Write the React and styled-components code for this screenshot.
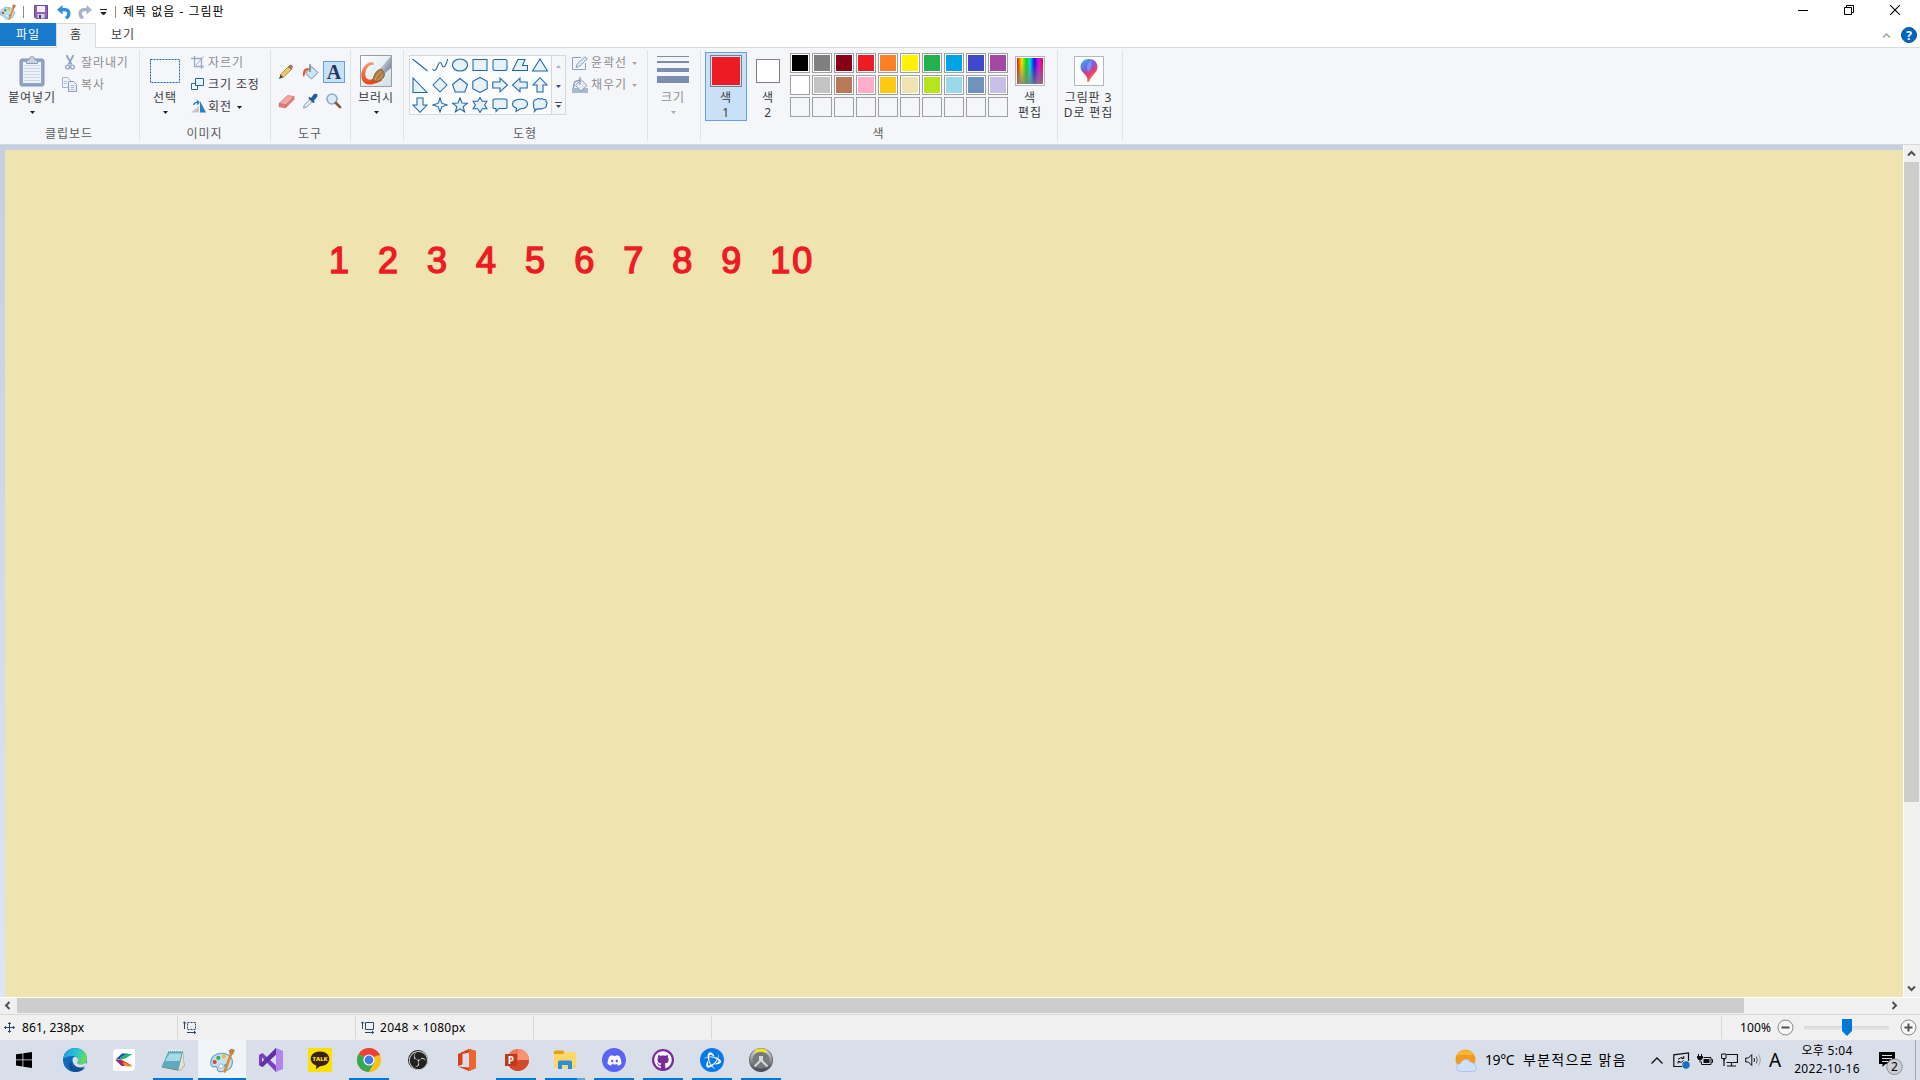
import React from "react";
import styled, { createGlobalStyle, css } from "styled-components";
import { FaDiscord, FaGithub } from "react-icons/fa";
import { SiObsstudio, SiBattledotnet } from "react-icons/si";

const Global = createGlobalStyle`
  * { box-sizing: border-box; }
  body { margin: 0; overflow: hidden; background: #fff; }
  svg { display: block; flex: none; }
`;

const Window = styled.div`
  width: 1920px;
  height: 1080px;
  display: flex;
  flex-direction: column;
  background: #fff;
  color: #1e1e1e;
  font-family: "Noto Sans", "Noto Sans CJK KR", sans-serif;
  font-size: 12px;
  white-space: nowrap;
`;

/* ---------- title bar ---------- */
const TitleBar = styled.header`
  height: 23px;
  display: flex;
  align-items: center;
  justify-content: space-between;
`;
const QuickAccess = styled.div`
  display: flex;
  align-items: center;
`;
const Tool = styled.span`
  display: flex;
  justify-content: ${(p) => p.$align || "center"};
  width: ${(p) => p.$w}px;
`;
const Divider = styled.span`
  width: 1px;
  height: 12px;
  background: #8a8a8a;
`;
const Title = styled.span`
  margin-left: 7px;
  line-height: 22px;
  color: #000;
  letter-spacing: 1px;
`;
const Controls = styled.div`
  display: flex;
  height: 20px;
  margin: -3px 2px 0 0;
`;
const Control = styled.button`
  width: 46px;
  height: 20px;
  padding: 0;
  border: 0;
  background: none;
  display: flex;
  align-items: center;
  justify-content: center;
`;

/* ---------- tabs ---------- */
const Tabs = styled.nav`
  height: 25px;
  display: flex;
  border-bottom: 1px solid #dadbdc;
`;
const FileTab = styled.div`
  width: 56px;
  height: 23px;
  line-height: 24px;
  text-align: center;
  color: #fff;
  background: #1979ca;
  letter-spacing: 0.9px;
`;
const Tab = styled.div`
  width: ${(p) => p.$w}px;
  height: 25px;
  line-height: 24px;
  text-align: center;
  color: #3b3b3b;
  letter-spacing: 0.9px;
  ${(p) =>
    p.$active &&
    css`
      background: #f5f6f7;
      border: 1px solid #dadbdc;
      border-bottom: 0;
      line-height: 22px;
    `}
`;
const TabTools = styled.div`
  margin-left: auto;
  display: flex;
  align-items: center;
  gap: 10px;
  padding-right: 3px;
`;

/* ---------- ribbon ---------- */
const Ribbon = styled.section`
  height: 97px;
  display: flex;
  padding-top: 2px;
  background: #f4f6f9;
  border-bottom: 1px solid #d5d8dc;
`;
const Group = styled.div`
  width: ${(p) => p.$w}px;
  height: 91px;
  display: flex;
  flex-direction: column;
  border-right: 1px solid #e0e2e5;
`;
const GroupBody = styled.div`
  height: 74px;
  display: flex;
  align-items: flex-start;
  padding-left: ${(p) => p.$pl || 0}px;
`;
const GroupLabel = styled.div`
  height: 17px;
  line-height: 20px;
  text-align: center;
  color: #5a5a5a;
  letter-spacing: 0.9px;
  padding-right: 1px;
`;
const BigButton = styled.div`
  width: ${(p) => p.$w}px;
  height: 69px;
  margin-top: 2px;
  margin-left: ${(p) => p.$ml || 0}px;
  display: flex;
  flex-direction: column;
  align-items: center;
  padding-top: 1px;
  border: 1px solid ${(p) => (p.$active ? "#62a2e4" : "transparent")};
  background: ${(p) => (p.$active ? "#c9e0f7" : "none")};
  color: ${(p) => (p.$muted ? "#8d8d8d" : "#3b3b3b")};
`;
const IconArea = styled.div`
  height: 34px;
  margin-bottom: 1px;
  display: flex;
  align-items: center;
  justify-content: center;
`;
const Caption = styled.div`
  height: 15px;
  line-height: 17px;
  letter-spacing: 0.85px;
`;
const DropMark = styled.div`
  padding-top: 7px;
`;
const Stack = styled.div`
  display: flex;
  flex-direction: column;
  margin: 1px 0 0 ${(p) => p.$ml || 0}px;
`;
const SmallButton = styled.div`
  height: 22px;
  padding-top: 2px;
  display: flex;
  align-items: center;
  color: ${(p) => (p.$muted ? "#8d8d8d" : "#3b3b3b")};
  line-height: 20px;
  letter-spacing: 0.9px;
`;
const SmallIcon = styled.span`
  width: ${(p) => p.$w || 19}px;
  display: flex;
  margin-bottom: 1px;
`;
const SmallArrow = styled.span`
  margin-left: ${(p) => p.$ml || 5}px;
`;
const ToolGrid = styled.div`
  display: grid;
  grid-template-columns: repeat(3, 22px);
  grid-auto-rows: 22px;
  gap: 7px 2px;
  margin-top: 11px;
`;
const ToolCell = styled.div`
  display: flex;
  align-items: center;
  justify-content: center;
  border: 1px solid ${(p) => (p.$active ? "#62a2e4" : "transparent")};
  background: ${(p) => (p.$active ? "#c9e0f7" : "none")};
`;
const LetterA = styled.span`
  font: bold 20px/20px "Liberation Serif", serif;
  color: #1f3864;
`;
const ShapeBox = styled.div`
  width: 157px;
  height: 60px;
  margin-top: 5px;
  display: flex;
  border: 1px solid #d5d8dc;
  background: #fbfcfd;
`;
const ShapeGrid = styled.div`
  display: grid;
  grid-template-columns: repeat(7, 20px);
  grid-auto-rows: 20px;
  width: 141px;
  height: 58px;
  margin-top: -1px;
`;
const ShapeCell = styled.div`
  display: flex;
  align-items: center;
  justify-content: center;
`;
const ShapeScroll = styled.div`
  width: 14px;
  display: grid;
  grid-template-rows: 20px 20px 18px;
  place-items: center;
  border-left: 1px solid #d5d8dc;
  background: #f4f6f9;
`;
const Lines = styled.div`
  width: 32px;
  height: 32px;
  display: flex;
  flex-direction: column;
  justify-content: space-between;
  padding: 1px 0 4px;
`;
const Line = styled.span`
  height: ${(p) => p.$h}px;
  background: #7b8db0;
`;
const Swatch = styled.div`
  width: ${(p) => p.$s}px;
  height: ${(p) => p.$s}px;
  border: 1px solid ${(p) => p.$border || "#a0a0a0"};
  padding: 1px;
  background: ${(p) => (p.$c ? p.$gap || "#fff" : "transparent")};
  &::before {
    content: "";
    display: block;
    height: 100%;
    background: ${(p) => p.$c || "transparent"};
  }
`;
const Palette = styled.div`
  display: grid;
  grid-template-columns: repeat(10, 20px);
  grid-auto-rows: 20px;
  gap: 2px;
  margin: 3px 0 0 1px;
`;
const IconFrame = styled.div`
  width: ${(p) => p.$s}px;
  height: ${(p) => p.$s}px;
  border: 1px solid #b4b8bd;
  padding: 1px;
  background: #fff;
  overflow: hidden;
`;
const Rainbow = styled.div`
  height: 100%;
  background: linear-gradient(to bottom, transparent 20%, #808080cc),
    linear-gradient(to right, #e01010, #f5e000 18%, #10d020 36%, #00e0e0 50%, #1010e0 66%, #e010e0 84%, #e01030);
`;

/* ---------- canvas ---------- */
const Workspace = styled.main`
  height: 852px;
  display: flex;
`;
const Backdrop = styled.div`
  width: 1903px;
  padding: 5px 0 0 5px;
  background: linear-gradient(#c6cfe0, #dce6f4);
`;
const Canvas = styled.div`
  height: 847px;
  padding: 91px 0 0 324px;
  background: #efe3af;
`;
const Numbers = styled.div`
  font-family: "Liberation Sans", sans-serif;
  font-size: 36px;
  line-height: 40px;
  color: #ed1c24;
  white-space: pre;
  letter-spacing: 2px;
  word-spacing: 1.5px;
  -webkit-text-stroke: 1.5px #ed1c24;
  stroke-linejoin: round;
`;
const VScroll = styled.div`
  width: 17px;
  display: flex;
  flex-direction: column;
  align-items: flex-start;
  background: #f0f0f0;
  border-left: 1px solid #fff;
`;
const VThumb = styled.div`
  width: 15px;
  height: 640px;
  background: #cdcdcd;
`;
const VArrow = styled.div`
  height: 17px;
  display: flex;
  align-items: center;
  padding-left: 3px;
  margin-top: ${(p) => (p.$end ? "auto" : 0)};
`;
const HScroll = styled.div`
  height: 17px;
  display: flex;
  align-items: flex-start;
  padding-right: 17px;
  background: #f0f0f0;
  border-top: 1px solid #fff;
`;
const HThumb = styled.div`
  width: 1727px;
  height: 15px;
  background: #cdcdcd;
`;
const HArrow = styled.div`
  width: 17px;
  height: 15px;
  display: flex;
  align-items: center;
  justify-content: ${(p) => (p.$end ? "center" : "flex-start")};
  padding-left: ${(p) => (p.$end ? 0 : 3)}px;
  margin-left: ${(p) => (p.$end ? "auto" : 0)};
`;

/* ---------- status bar ---------- */
const StatusBar = styled.footer`
  height: 26px;
  display: flex;
  padding-top: 1px;
  border-top: 1px solid #d7d7d7;
  background: #f0f0f0;
`;
const StatusCell = styled.div`
  width: ${(p) => p.$w}px;
  height: 23px;
  padding-left: ${(p) => p.$pl}px;
  display: flex;
  align-items: center;
  gap: ${(p) => p.$gap || 6}px;
  border-right: 1px solid #d7d7d7;
  color: #000;
  letter-spacing: ${(p) => p.$ls || 0}px;
`;
const Zoom = styled.div`
  margin-left: auto;
  width: 199px;
  height: 23px;
  padding-left: 18px;
  border-left: 1px solid #d7d7d7;
  display: flex;
  align-items: center;
  color: #000;
`;
const Percent = styled.span`
  width: 37px;
  letter-spacing: 0.1px;
`;
const Slider = styled.div`
  width: 85px;
  height: 17px;
  margin: 0 11px 0 10px;
  display: flex;
  align-items: center;
  justify-content: center;
  background: linear-gradient(#d6d6d6, #e7eaea) center / 100% 4px no-repeat;
`;

/* ---------- taskbar ---------- */
const Taskbar = styled.div`
  height: 40px;
  display: flex;
  background: #d8dfe8;
`;
const TaskItem = styled.div`
  width: 48px;
  height: 40px;
  margin-right: ${(p) => p.$mr ?? 1}px;
  display: flex;
  flex-direction: column;
  align-items: center;
  justify-content: space-between;
  background: ${(p) => (p.$active ? "#f0f4f8" : "none")};
`;
const TaskIcon = styled.div`
  height: 38px;
  padding-top: 2px;
  display: flex;
  align-items: center;
`;
const Underline = styled.div`
  width: ${(p) => (p.$full ? 48 : 40)}px;
  height: 2px;
  background: ${(p) => (p.$split ? "linear-gradient(to right, #0078d7 80%, #5aa5e4 80%)" : "#0078d7")};
`;
const Disc = styled.div`
  width: ${(p) => p.$s || 24}px;
  height: ${(p) => p.$s || 24}px;
  border-radius: 50%;
  display: flex;
  align-items: center;
  justify-content: center;
  color: #fff;
  background: ${(p) => p.$c};
`;
const Tray = styled.div`
  margin-left: auto;
  display: flex;
  align-items: center;
  color: #000;
`;
const Weather = styled.div`
  display: flex;
  align-items: center;
  width: 190px;
  font-size: 14px;
  line-height: 20px;
`;
const Temp = styled.span`
  width: 38px;
  margin-left: 7px;
  letter-spacing: -0.4px;
`;
const Sky = styled.span`
  letter-spacing: 1.25px;
`;
const TrayIcon = styled.div`
  width: 24px;
  display: flex;
  justify-content: center;
`;
const Ime = styled.div`
  width: 20px;
  font: 19px/20px "Noto Sans", sans-serif;
  text-align: center;
`;
const Clock = styled.div`
  width: 84px;
  text-align: center;
  line-height: 18px;
  letter-spacing: 0.3px;
`;
const Notice = styled.div`
  width: 46px;
  padding-left: 10px;
`;
const Peek = styled.div`
  width: 5px;
  height: 40px;
  border-left: 1px solid #9fa5ad;
`;

/* ---------- icons ---------- */
const Svg = ({ w, h = w, vb, children, className }) => (
  <svg className={className} width={w} height={h} viewBox={vb || `0 0 ${w} ${h}`} fill="none">
    {children}
  </svg>
);
const Arrow = ({ c = "#1e1e1e" }) => (
  <Svg w={5} h={3}>
    <path d="M0 0h5L2.500 3z" fill={c} />
  </Svg>
);
const Chevron = ({ d = "up", c = "#505050", w = 2, s = 9 }) => (
  <Svg w={s} vb="0 0 9 9">
    <path
      d={{ up: "M1 6.500l3.500-3.500L8 6.500", down: "M1 2.500l3.500 3.500L8 2.500", left: "M6.500 1L3 4.500 6.500 8", right: "M2.500 1L6 4.500 2.500 8" }[d]}
      stroke={c}
      strokeWidth={w}
    />
  </Svg>
);
const PaintIcon = ({ s }) => (
  <Svg w={s} vb="0 0 24 24">
    <path d="M11 5C5 5 .7 9 .7 14.200c0 3 1.700 4.300 3.600 3.800 1.900-.5 2.900.3 2.700 2-.2 1.800 1.300 2.800 4 2.800 6 0 10.500-4 10.500-9.300S17 5 11 5z" fill="#c2e0f2" stroke="#5b9fc4" />
    <circle cx="4.500" cy="13.500" r="1.900" fill="#d8432e" />
    <circle cx="8" cy="9.500" r="2" fill="#3fae49" />
    <circle cx="13.300" cy="8" r="2" fill="#f2b92b" />
    <circle cx="10.500" cy="17.500" r="2.200" fill="#fff" stroke="#5b9fc4" strokeWidth=".6" />
    <circle cx="15.500" cy="17" r="1.800" fill="#3f84d0" />
    <path d="M20.300 5.500L14 22.500" stroke="#e58a2c" strokeWidth="2.600" strokeLinecap="round" />
    <path d="M18 2.500l3-2 2.800 1.600-1.600 4.200-3.600-1z" fill="#b98358" />
  </Svg>
);
const SaveIcon = () => (
  <Svg w={14}>
    <path d="M.5.5h13v13H2L.5 12z" fill="#8e63b8" stroke="#6b4496" />
    <path d="M3 1h8v6H3z" fill="#f3edf8" />
    <path d="M3.500 9h7v4.500h-7z" fill="#d6d0dc" />
    <path d="M5 10h2v3.500H5z" fill="#4a3566" />
  </Svg>
);
const UndoShape = styled(Svg)`
  transform: ${(p) => (p.$flip ? "scaleX(-1)" : "none")};
`;
const UndoIcon = ({ c, flip }) => (
  <UndoShape w={14} $flip={flip}>
    <path d="M5.500 0v9.500L0 4.700z" fill={c} />
    <path d="M4 4.700h3.500c5 0 6 5.300 1.500 8.600" stroke={c} strokeWidth="3.300" />
  </UndoShape>
);
const Clipboard = () => (
  <Svg w={26} h={31}>
    <rect x="1" y="3" width="24" height="27" rx="2" fill="#91a3c2" stroke="#8295b6" />
    <path d="M4 6h18v21H4z" fill="#eef3fa" />
    <path d="M5 9.500h16M5 12.500h16M5 15.500h16M5 18.500h16M5 21.500h16M5 24.500h16" stroke="#c9d6e8" />
    <path d="M7.500 7.500V4H10c0-4.500 6-4.500 6 0h2.500v3.500z" fill="#c8d1e0" stroke="#8b9bb8" />
  </Svg>
);
const CutIcon = () => (
  <Svg w={10} h={15}>
    <path d="M1.500 0l5 9.500M8.500 0l-5 9.500" stroke="#93a3bf" strokeWidth="1.800" />
    <circle cx="2.500" cy="12" r="1.900" stroke="#93a3bf" strokeWidth="1.300" />
    <circle cx="7.500" cy="12" r="1.900" stroke="#93a3bf" strokeWidth="1.300" />
  </Svg>
);
const CopyIcon = () => (
  <Svg w={15}>
    <path d="M.5.500h5l3 3v7h-8z" fill="#eef2f8" stroke="#a3b1ca" />
    <path d="M6.500 4.500h5l3 3v7h-8z" fill="#eef2f8" stroke="#8c9dbb" />
    <path d="M2 4.500h3M2 6.500h3M8.500 8.500h4M8.500 10.500h4M8.500 12.500h4" stroke="#b1bfd5" />
  </Svg>
);
const CropIcon = () => (
  <Svg w={13}>
    <path d="M3.500 0v10.500H13M0 2.500h10.500V13" stroke="#9aa9c4" strokeWidth="1.300" />
    <path d="M5 9l7.500-8.500" stroke="#9aa9c4" />
  </Svg>
);
const ResizeIcon = () => (
  <Svg w={14} h={13}>
    <path d="M.5 5.500h6v6h-6z" fill="#fff" stroke="#1b66ab" />
    <path d="M4.500.5h8v7h-8z" fill="#e9f3fb" stroke="#1b66ab" />
  </Svg>
);
const RotateIcon = () => (
  <Svg w={15} h={13}>
    <path d="M0 12.500h8V6z" fill="#c3c6ca" />
    <path d="M9 1v11.500H15z" fill="#2b7fc0" />
    <path d="M2.500 5C3.500 2.500 5 2 7 2.500M6 .500l2 2-2 2" stroke="#1979ca" strokeWidth="1.200" />
  </Svg>
);
const SelectIcon = () => (
  <Svg w={30} h={24}>
    <path d="M.5.5h29v23H.5z" stroke="#1b66ab" strokeDasharray="2 1" />
  </Svg>
);
const PencilIcon = () => (
  <Svg w={16}>
    <path d="M1 15l1.500-4.500 2.800 2.800z" fill="#4b4036" />
    <path d="M2.500 10.500l8-8 3 3-8.200 7.800z" fill="#f1c95a" stroke="#94702b" strokeWidth=".7" />
    <path d="M10 3l2-2q2-.3 2.700 1.500L13.500 5.500z" fill="#c46565" stroke="#5a8a6a" strokeWidth=".6" />
  </Svg>
);
const BucketIcon = () => (
  <Svg w={17} h={16}>
    <path d="M9.500 2.500l6.500 6-6.500 6.500-6-5.800z" fill="#cfe4f2" stroke="#6a8ea8" />
    <path d="M8 0v8" stroke="#54738c" strokeWidth="1.200" />
    <path d="M8 4.500C3 3.500.5 5 1 12.500c2.300.3 2-4 2.500-5z" fill="#ec5320" />
  </Svg>
);
const FillIcon = () => (
  <Svg w={16} h={16}>
    <path d="M0 11h16v5H0z" fill="#a9b8d1" />
    <path d="M9 2.500l6 6-6 5.500-5.500-5.500z" fill="#e6ecf5" stroke="#8c9dbb" />
    <path d="M8 0v7.500M8 3.500C3.500 3 1.500 5 1.500 11" stroke="#8c9dbb" strokeWidth="1.400" />
  </Svg>
);
const EraserIcon = () => (
  <Svg w={17} h={15}>
    <path d="M1 9.500L9.500 1.500l6.500 1-8 8.500z" fill="#f3a6a2" stroke="#cf7672" strokeWidth=".7" />
    <path d="M1 9.500l7 1.500-.5 3L1 12.800zM8 11l8-8.500v3L7.500 14z" fill="#e27a78" stroke="#c86562" strokeWidth=".5" />
  </Svg>
);
const DropperIcon = () => (
  <Svg w={16}>
    <path d="M1.500 15l1-3.300L8.500 6l2.200 2-6 6z" fill="#e6eef5" stroke="#7b8fa3" strokeWidth=".9" />
    <path d="M7 4.500l5 5M9 6.500l3.500-4.500q2-1 2 1L10.500 8z" stroke="#1d5fa0" strokeWidth="2" fill="#1d5fa0" />
  </Svg>
);
const MagnifierIcon = () => (
  <Svg w={16}>
    <circle cx="6" cy="6" r="5" fill="#d9ebf8" stroke="#93a9c4" strokeWidth="1.600" />
    <path d="M10 10l4 4.200" stroke="#80583c" strokeWidth="2.600" strokeLinecap="round" />
  </Svg>
);
const BrushIcon = () => (
  <Svg w={32}>
    <defs>
      <linearGradient id="bbg" x1="0" y1="0" x2="1" y2="1">
        <stop stopColor="#fff" />
        <stop offset="1" stopColor="#cfe0e8" />
      </linearGradient>
      <linearGradient id="paint" x1="0" y1="0" x2="0" y2="1">
        <stop stopColor="#f79a78" />
        <stop offset="1" stopColor="#e9430f" />
      </linearGradient>
      <linearGradient id="ferrule" x1="0" y1="0" x2="1" y2="1">
        <stop stopColor="#eef2f6" />
        <stop offset="1" stopColor="#66768b" />
      </linearGradient>
    </defs>
    <path d="M.5.500h31v31H.500z" fill="url(#bbg)" stroke="#9a9c9e" />
    <path d="M13.500 7.500C7 5.500 1.500 13 1.300 20c-.2 6 3.500 9.500 8 9.500 5 0 11-2.500 13-4.500l-8-2c-4.500 3-9 2-9-3.500C5.300 13.500 10 9 13.500 10z" fill="url(#paint)" />
    <path d="M20 14L31 1v12l-7 6z" fill="url(#ferrule)" />
    <path d="M13 26.500c0-7 4-12 8.500-12.500l3 4.500c.5 5-4.500 8-11.500 8z" fill="#b07a42" stroke="#79502a" strokeWidth=".7" />
    <path d="M15 25c1-4 3.500-7 6.500-8.500M17 25.500c2-1 4.500-3 5.500-6" stroke="#d8a86d" />
  </Svg>
);
const OutlineIcon = () => (
  <Svg w={16} h={14}>
    <path d="M13.500 7v6.500H.5v-12H9" stroke="#8c9dbb" />
    <path d="M4 11.500l1.200-3.700L13 .800l2.300 2-7.600 7.500z" fill="#dfe6f0" stroke="#8c9dbb" />
  </Svg>
);
const shapePaths = [
  "M.5 2l15 12",
  "M.5 12c2.500 4 4.500-1 5.500-4s3-3.500 4 0 4 2 5.500-6",
  "M8 2c4.500 0 7.500 2.700 7.500 6S12.500 14 8 14 .5 11.300.5 8 3.500 2 8 2z",
  "M1 2.500h14v11H1z",
  "M3 2.500h10q2 0 2 2v7q0 2-2 2H3q-2 0-2-2v-7q0-2 2-2z",
  "M.5 13.500l5.500-11h7l-2.500 6h5v5z",
  "M8 2L15.500 14H.5z",
  "M1 1v14.500h14z",
  "M8 1l7 7-7 7-7-7z",
  "M8 1.500L15.500 7.500l-2.700 7.500H3.200L.5 7.500z",
  "M8 .5l7.200 3.800v7.400L8 15.500.8 11.700V4.300z",
  "M.8 5h7.200V1.200L15.500 8 8 14.800V11H.8z",
  "M15.200 5H8V1.200L.5 8 8 14.800V11h7.200z",
  "M5 15V8H1L8 .7 15 8h-4v7z",
  "M11 1v7h4l-7 7.300L1 8h4V1z",
  "M8 1l1.800 5.200L15 8 9.800 9.800 8 15 6.200 9.800 1 8l5.200-1.800z",
  "M8 .8l1.900 5.100 5.500.3-4.300 3.400 1.500 5.200L8 11.800l-4.600 3 1.500-5.200L.6 6.200l5.500-.3z",
  "M8 .5l2.300 3.800h4.600L12.600 8l2.300 3.700h-4.600L8 15.500l-2.300-3.800H1.100L3.400 8 1.100 4.300h4.600z",
  "M2.500 2h11Q15 2 15 3.500v6.500q0 1.500-1.500 1.500H7L4 14.500v-3H2.500Q1 11.500 1 10V3.500Q1 2 2.500 2z",
  "M8.500 2.200c4.200 0 7 2 7 4.800s-2.800 4.800-7 4.800L4 14.500l.5-3.300C2 10.200.5 9 .5 7c0-2.800 3.800-4.800 8-4.800z",
  "M4.500 2.500q1.800-1.800 3.500-.3 2.200-1.200 3.700.3 2.800-.3 2.300 2 2 1.500.3 3.300.5 2.900-2.200 3.200-1.600 1.600-3.700.5-2.200 1.100-3.200.2L2.500 14.500l.5-2.700Q.5 10.500 2 8 .5 6.500 1.800 4.800 1.700 2.500 4.500 2.500z",
];
const QuadrantIcon = ({ dashed }) => (
  <Svg w={14} h={13}>
    <path d="M1.500 8V1M0 2.500L1.500.8 3 2.500M4 11.500h8.500M11 10l1.700 1.500L11 13" stroke="#2b4668" />
    <path d="M4.500 1.500h8v7h-8z" stroke="#2b4668" strokeDasharray={dashed ? "2 1" : undefined} />
  </Svg>
);
const MoveIcon = () => (
  <Svg w={11}>
    <path d="M5.500.5v10M.5 5.500h10M4 2L5.500.5 7 2M4 9l1.500 1.500L7 9M2 4L.5 5.500 2 7M9 4l1.500 1.500L9 7" stroke="#2b4668" />
  </Svg>
);
const ZoomButton = ({ plus }) => (
  <Svg w={17}>
    <circle cx="8.500" cy="8.500" r="7.500" fill="#f6f6f6" stroke="#858585" />
    <path d={plus ? "M4.500 8.500h8M8.500 4.500v8" : "M4.500 8.500h8"} stroke="#505050" strokeWidth="2" />
  </Svg>
);
const Paint3D = () => (
  <Svg w={26}>
    <defs>
      <linearGradient id="drop" x1="0" y1="0" x2=".7" y2="1">
        <stop stopColor="#20c8e8" />
        <stop offset=".45" stopColor="#8058e0" />
        <stop offset=".7" stopColor="#e83c78" />
        <stop offset="1" stopColor="#f6a51c" />
      </linearGradient>
    </defs>
    <path d="M13 1c5 0 8.500 3.500 8.500 8 0 6-6 8-8 14-1.500 2-3 1-2-1 0-6-7-7-7-13C4.500 4.500 8 1 13 1z" fill="url(#drop)" />
    <path d="M15 3c-4 2-5 6-3 11 3-3 5-7 3-11z" fill="#68a8fa" opacity=".8" />
    <path d="M7 12c1 4 4 5 5 9l2-5z" fill="#e93b67" opacity=".8" />
  </Svg>
);

const WindowsLogo = () => (
  <Svg w={16}>
    <path d="M0 2.300l6.500-.9v6.100H0zM7.300 1.300L16 0v7.500H7.300zM0 8.300h6.500v6.200L0 13.600zM7.300 8.300H16V16l-8.700-1.300z" fill="#000" />
  </Svg>
);
const EdgeIcon = () => (
  <Svg w={24}>
    <defs>
      <linearGradient id="edgeTop" x1="0" y1="0" x2="1" y2=".3">
        <stop stopColor="#1f9ae0" />
        <stop offset=".6" stopColor="#2bc3d2" />
        <stop offset="1" stopColor="#62dc5a" />
      </linearGradient>
    </defs>
    <circle cx="12" cy="12" r="12" fill="#0f6cbd" />
    <path d="M.3 11C1 4.500 6 0 12.200 0 19 0 24 5 24 10.500c0 4-3 6-6.200 6-3 0-4-1.200-3.300-2.300 1.800-2.600-.3-6.200-4.500-6.200C5.500 8 1 9.500.3 11z" fill="url(#edgeTop)" />
    <path d="M8.500 12c-1.500 5 2.500 9.500 8 9.300 2 0 4-1 5.500-2-1.500 2.700-5 4.700-9.500 4.700C7 24 3.500 17 8.500 12z" fill="#124e97" />
    <path d="M9.500 12c0-2.500 1.500-3.500 3-3.300 2.500.8 3.300 3.500 2 5.500-.7 1.100.3 2.300 3.300 2.300 2 0 3.800-.7 5-2l.7 2.500-2.500 2.800c-6 2-11.500-2-11.500-7.800z" fill="#d8dfe8" />
    <path d="M9.500 13c.5 5 5.500 8 12 5.500-1.500 2-4 3-6 2.700-4-.4-6.500-4-6-8.200z" fill="#124e97" />
  </Svg>
);
const RibbonAppIcon = () => (
  <Svg w={22}>
    <path d="M4.500 0H20q2 0 2 2v15.500q0 4.500-4.500 4.500H2q-2 0-2-2V4.500Q0 0 4.500 0z" fill="#fff" />
    <path d="M2.500 10.500L9 4.500h6l-6 6z" fill="#1e4fa3" />
    <path d="M7 8.500l6-3.500h6.500l-7 4.500-6 1z" fill="#1eb47b" />
    <path d="M2.500 11H9l10 5.500h-6.500z" fill="#e42c48" />
    <path d="M8 14.500l4-1 7.500 4H14z" fill="#f08b1c" />
    <path d="M2.500 11H7l5 6H8.500z" fill="#9b2b71" />
  </Svg>
);
const NotepadIcon = () => (
  <Svg w={24} h={24}>
    <path d="M8 3.500l14 0 1.500 14.500-4.500 5L1 19.500z" fill="#8c7146" />
    <path d="M22 3l1 15-4.500 5-1.500-1z" fill="#e9e2d3" />
    <path d="M7.500 3H22l-4.500 19L.5 19z" fill="#5faabd" />
    <path d="M8.500 5.500H20.500l-2 7.500L4 13z" fill="#a5dce3" />
    <path d="M8 2.500h14" stroke="#eef3f6" strokeWidth="2" strokeDasharray="1 1" />
  </Svg>
);
const VisualStudioIcon = () => (
  <Svg w={24}>
    <path d="M17 0l7 3v18l-7 3z" fill="#b083f0" />
    <path d="M17 0v6.500L3.500 19 0 17V7l3.500-2L17 17.500V24L3 9.500v5z" fill="#7a3fc0" />
    <path d="M17 0v6.500L3.500 19 0 17l17-17z" fill="#6031a8" />
  </Svg>
);
const TalkIcon = () => (
  <Svg w={24}>
    <path d="M0 0h24v24H0z" fill="#fae100" />
    <path d="M12 3.500c5.500 0 9.300 3.200 9.300 7.300s-3.800 7.400-9.300 7.400l-4 3 .4-3.500C5 16.500 2.700 14 2.700 10.800c0-4.100 3.800-7.300 9.300-7.300z" fill="#3b1e1e" />
    <text x="12" y="13" textAnchor="middle" fontSize="5.800" fontWeight="800" fontFamily="Open Sans, sans-serif" fill="#fae100">TALK</text>
  </Svg>
);
const ChromeIcon = () => (
  <Svg w={24}>
    <circle cx="12" cy="12" r="12" fill="#fbc116" />
    <path d="M12 12L1.600 6A12 12 0 0 1 22.400 6z" fill="#ea4335" />
    <path d="M1.600 6A12 12 0 0 0 12 24l5.200-9z" fill="#34a853" />
    <path d="M12 12h11a12 12 0 0 1-11 12l5-9z" fill="#fbc116" />
    <path d="M22.400 6H12v1l11 .5z" fill="#ea4335" />
    <circle cx="12" cy="12" r="5.600" fill="#fff" />
    <circle cx="12" cy="12" r="4.400" fill="#3b7ded" />
  </Svg>
);
const OfficeIcon = () => (
  <Svg w={18} h={24}>
    <path d="M0 6l11-5 7 2v17l-7 3L0 18.500l11 1V4.500L4.500 6v10.500L0 18z" fill="#dc3e15" />
    <path d="M11 1l7 2v17l-7 3z" fill="#f0642d" />
  </Svg>
);
const PowerPointIcon = () => (
  <Svg w={25} h={24}>
    <circle cx="14" cy="12" r="11" fill="#ee7350" />
    <path d="M14 12h11a11 11 0 0 1-21 4.500z" fill="#d3492b" />
    <path d="M14 1a11 11 0 0 1 11 11H14z" fill="#ff9273" />
    <path d="M1 6h12v12H1z" fill="#bd3a1b" />
    <text x="7" y="15.500" textAnchor="middle" fontSize="10" fontWeight="700" fontFamily="Open Sans, sans-serif" fill="#fff">P</text>
  </Svg>
);
const FolderIcon = () => (
  <Svg w={22} h={20}>
    <path d="M0 2q0-1.500 1.500-1.500H9L11 3v3H0z" fill="#e0a10c" />
    <path d="M0 4h9l2-2h11v16H0z" fill="#ffd766" />
    <path d="M4 19v-7q0-1.500 1.500-1.500h11q1.500 0 1.500 1.500v7h-4v-4H8v4z" fill="#2d8fd9" />
  </Svg>
);
const OverwatchIcon = () => (
  <Svg w={24}>
    <defs>
      <linearGradient id="ring" x1="0" y1="0" x2="0" y2="1">
        <stop stopColor="#d4d6d7" />
        <stop offset="1" stopColor="#4a4d52" />
      </linearGradient>
    </defs>
    <circle cx="12" cy="12" r="12" fill="#5b5e63" />
    <circle cx="12" cy="12" r="9.900" fill="#77797d" stroke="url(#ring)" strokeWidth="3" />
    <path d="M6.500 3.500Q12 .8 17.500 3.500" stroke="#f1e21e" strokeWidth="3.200" />
    <path d="M11 8v5L5.500 18.500M13 8v5l5.500 5.500" stroke="#d5d7d8" strokeWidth="2" />
  </Svg>
);
const WeatherIcon = () => (
  <Svg w={23} h={24}>
    <circle cx="10.500" cy="11.500" r="10" fill="#f59a1c" />
    <path d="M2 7A10 10 0 0 1 19 7z" fill="#f5b632" />
    <path d="M5.500 23.500a4 4 0 0 1 0-8 5.500 5.500 0 0 1 10-1.500q3 0 3.500 2.500a3.600 3.600 0 0 1-.5 7z" fill="#cfe0fa" stroke="#9dbdf0" strokeWidth=".7" />
  </Svg>
);
const TabletIcon = () => (
  <Svg w={17}>
    <path d="M9 14.500H.8V2.800L15.500 1v8" stroke="#111" strokeWidth="1.200" />
    <path d="M5 7.500q2.500-2.800 5.500-1.500M10.800 4v2.500H8.500M10.500 8.500q-2 2.800-5 1.500M5 11.500V9.500h2" stroke="#111" />
    <circle cx="13" cy="13" r="3.700" fill="#1d6fbf" />
  </Svg>
);
const BatteryIcon = () => (
  <Svg w={16} h={12}>
    <path d="M6.500 3.500h7.500v7H4.500V7.500M14.500 5.500h1v3h-1" stroke="#111" />
    <path d="M6.500 5h6v4h-6z" fill="#111" />
    <path d="M1.500 0v2.500M4.500 0v2.500M3 5v3.500" stroke="#111" />
    <path d="M0 2h6v2L4.500 6h-3L0 4z" fill="#111" />
  </Svg>
);
const NetworkIcon = () => (
  <Svg w={17} h={14}>
    <path d="M5.500 1.500h11v8H5.500M10.500 9.500v3.500M6 13h9M3 6v7" stroke="#111" strokeWidth="1.200" />
    <path d="M.6 1h4.400v4.500H.6zM3 5v3" stroke="#111" />
  </Svg>
);
const SpeakerIcon = () => (
  <Svg w={17} h={14}>
    <path d="M.7 5h2.800l3.300-3.500v11L3.500 9H.7z" stroke="#111" />
    <path d="M9 5q1 2 0 4" stroke="#111" />
    <path d="M11.300 3.500q2 3.500 0 7" stroke="#555" />
    <path d="M13.500 1.500q3.500 5.500 0 11" stroke="#9aa0a8" />
  </Svg>
);
const NoticeIcon = () => (
  <Svg w={26} h={30}>
    <path d="M0 7h16v12H6.500L3.500 22v-3H0z" fill="#000" />
    <path d="M3 10.500h10M3 13.500h10M3 16.500h6" stroke="#d8dfe8" />
    <circle cx="15.500" cy="21.700" r="7.800" fill="#ccd0d5" stroke="#8a8f95" />
    <text x="15.500" y="26" textAnchor="middle" fontSize="12" fontFamily="Noto Sans, sans-serif" fill="#000">2</text>
  </Svg>
);

/* ---------- data ---------- */
const palette = [
  "#000000", "#7f7f7f", "#880015", "#ed1c24", "#ff7f27", "#fff200", "#22b14c", "#00a2e8", "#3f48cc", "#a349a4",
  "#ffffff", "#c3c3c3", "#b97a57", "#ffaec9", "#ffc90e", "#efe4b0", "#b5e61d", "#99d9ea", "#7092be", "#c8bfe7",
  ...Array(10).fill(null),
];
const tasks = [
  { icon: <WindowsLogo />, mr: 3 },
  { icon: <EdgeIcon /> },
  { icon: <RibbonAppIcon /> },
  { icon: <NotepadIcon />, open: true },
  { icon: <PaintIcon s={25} />, open: true, active: true },
  { icon: <VisualStudioIcon /> },
  { icon: <TalkIcon /> },
  { icon: <ChromeIcon />, open: true },
  { icon: <Disc $s={20} $c="#222"><SiObsstudio size={19} color="#cfcfcf" /></Disc> },
  { icon: <OfficeIcon /> },
  { icon: <PowerPointIcon />, open: true },
  { icon: <FolderIcon />, open: true, split: true },
  { icon: <Disc $c="#5865f2"><FaDiscord size={15} /></Disc>, open: true },
  { icon: <Disc $s={22} $c="#7b2a9a"><FaGithub size={18} /></Disc>, open: true },
  { icon: <Disc $c="#0a78e6"><SiBattledotnet size={17} /></Disc>, open: true },
  { icon: <OverwatchIcon />, open: true },
];

export default function App() {
  return (
    <Window>
      <Global />
      <TitleBar>
        <QuickAccess>
          <Tool $w={23} $align="flex-start"><PaintIcon s={16} /></Tool>
          <Divider />
          <Tool $w={34}><SaveIcon /></Tool>
          <Tool $w={12}><UndoIcon c="#2c92da" /></Tool>
          <Tool $w={30}><UndoIcon c="#a7b3c8" flip /></Tool>
          <Tool $w={15} $align="flex-start">
            <Svg w={8} h={8}><path d="M0 1.500h7M1 4.500h5L3.500 7z" stroke="#222" fill="#222" strokeWidth="1" /></Svg>
          </Tool>
          <Divider />
          <Title>제목 없음 - 그림판</Title>
        </QuickAccess>
        <Controls>
          <Control><Svg w={10}><path d="M0 5.500h10" stroke="#000" /></Svg></Control>
          <Control><Svg w={10}><path d="M.5 2.500h7v7h-7zM2.500 2V.500h7v7H8" stroke="#000" /></Svg></Control>
          <Control><Svg w={10}><path d="M0 0l10 10M10 0L0 10" stroke="#000" strokeWidth="1.100" /></Svg></Control>
        </Controls>
      </TitleBar>
      <Tabs>
        <FileTab>파일</FileTab>
        <Tab $w={40} $active>홈</Tab>
        <Tab $w={54}>보기</Tab>
        <TabTools>
          <Chevron c="#a0a0a0" w={1.500} />
          <Svg w={16}>
            <circle cx="8" cy="8" r="7.500" fill="#0066c4" stroke="#0c4f91" />
            <text x="8" y="12.500" textAnchor="middle" fontSize="12" fontWeight="700" fontFamily="Open Sans, sans-serif" fill="#fff">?</text>
          </Svg>
        </TabTools>
      </Tabs>
      <Ribbon>
        <Group $w={140}>
          <GroupBody $pl={4}>
            <BigButton $w={56}>
              <IconArea><Clipboard /></IconArea>
              <Caption>붙여넣기</Caption>
              <DropMark><Arrow /></DropMark>
            </BigButton>
            <Stack $ml={2}>
              <SmallButton $muted><SmallIcon><Svg w={16} h={15}><g transform="translate(3 0)"><CutIcon /></g></Svg></SmallIcon>잘라내기</SmallButton>
              <SmallButton $muted><SmallIcon><CopyIcon /></SmallIcon>복사</SmallButton>
            </Stack>
          </GroupBody>
          <GroupLabel>클립보드</GroupLabel>
        </Group>
        <Group $w={131}>
          <GroupBody $pl={4}>
            <BigButton $w={42}>
              <IconArea><SelectIcon /></IconArea>
              <Caption>선택</Caption>
              <DropMark><Arrow /></DropMark>
            </BigButton>
            <Stack $ml={5}>
              <SmallButton $muted><SmallIcon $w={17}><CropIcon /></SmallIcon>자르기</SmallButton>
              <SmallButton><SmallIcon $w={17}><ResizeIcon /></SmallIcon>크기 조정</SmallButton>
              <SmallButton><SmallIcon $w={17}><RotateIcon /></SmallIcon>회전<SmallArrow><Arrow /></SmallArrow></SmallButton>
            </Stack>
          </GroupBody>
          <GroupLabel>이미지</GroupLabel>
        </Group>
        <Group $w={80}>
          <GroupBody $pl={4}>
            <ToolGrid>
              <ToolCell><PencilIcon /></ToolCell>
              <ToolCell><BucketIcon /></ToolCell>
              <ToolCell $active><LetterA>A</LetterA></ToolCell>
              <ToolCell><EraserIcon /></ToolCell>
              <ToolCell><DropperIcon /></ToolCell>
              <ToolCell><MagnifierIcon /></ToolCell>
            </ToolGrid>
          </GroupBody>
          <GroupLabel>도구</GroupLabel>
        </Group>
        <Group $w={53}>
          <GroupBody $pl={4}>
            <BigButton $w={42}>
              <IconArea><BrushIcon /></IconArea>
              <Caption>브러시</Caption>
              <DropMark><Arrow /></DropMark>
            </BigButton>
          </GroupBody>
        </Group>
        <Group $w={244}>
          <GroupBody $pl={5}>
            <ShapeBox>
              <ShapeGrid>
                {shapePaths.map((d, i) => (
                  <ShapeCell key={i}>
                    <Svg w={16}><path d={d} stroke="#1b66ab" fill={i < 2 ? "none" : "#e6f2f8"} strokeWidth="1.050" /></Svg>
                  </ShapeCell>
                ))}
              </ShapeGrid>
              <ShapeScroll>
                <Svg w={5} h={3}><path d="M0 3h5L2.500 0z" fill="#b0b6c0" /></Svg>
                <Arrow c="#3c4c6c" />
                <Svg w={7} h={7}><path d="M0 0h7v1H0zM1 3h5L3.500 6z" fill="#3c4c6c" /></Svg>
              </ShapeScroll>
            </ShapeBox>
            <Stack $ml={6}>
              <SmallButton $muted><SmallIcon><OutlineIcon /></SmallIcon>윤곽선<SmallArrow><Arrow c="#a8a8a8" /></SmallArrow></SmallButton>
              <SmallButton $muted><SmallIcon><FillIcon /></SmallIcon>채우기<SmallArrow><Arrow c="#a8a8a8" /></SmallArrow></SmallButton>
            </Stack>
          </GroupBody>
          <GroupLabel>도형</GroupLabel>
        </Group>
        <Group $w={53}>
          <GroupBody $pl={4}>
            <BigButton $w={42} $muted>
              <IconArea>
                <Lines><Line $h={1} /><Line $h={2} /><Line $h={4} /><Line $h={7} /></Lines>
              </IconArea>
              <Caption>크기</Caption>
              <DropMark><Arrow c="#a8a8a8" /></DropMark>
            </BigButton>
          </GroupBody>
        </Group>
        <Group $w={357}>
          <GroupBody $pl={4}>
            <BigButton $w={42} $active>
              <IconArea><Swatch $s={32} $border="#7a7f85" $gap="#c9e0f7" $c="#ed1c24" /></IconArea>
              <Caption>색</Caption>
              <Caption>1</Caption>
            </BigButton>
            <BigButton $w={42}>
              <IconArea><Swatch $s={24} $border="#808080" $c="#fff" /></IconArea>
              <Caption>색</Caption>
              <Caption>2</Caption>
            </BigButton>
            <Palette>
              {palette.map((c, i) => <Swatch key={i} $s={20} $c={c} />)}
            </Palette>
            <BigButton $w={42} $ml={1}>
              <IconArea><IconFrame $s={30}><Rainbow /></IconFrame></IconArea>
              <Caption>색</Caption>
              <Caption>편집</Caption>
            </BigButton>
          </GroupBody>
          <GroupLabel>색</GroupLabel>
        </Group>
        <Group $w={65}>
          <GroupBody $pl={2}>
            <BigButton $w={57}>
              <IconArea><IconFrame $s={30}><Paint3D /></IconFrame></IconArea>
              <Caption>그림판 3</Caption>
              <Caption>D로 편집</Caption>
            </BigButton>
          </GroupBody>
        </Group>
      </Ribbon>
      <Workspace>
        <Backdrop>
          <Canvas>
            <Numbers>{"1  2  3  4  5  6  7  8  9  10"}</Numbers>
          </Canvas>
        </Backdrop>
        <VScroll>
          <VArrow><Chevron /></VArrow>
          <VThumb />
          <VArrow $end><Chevron d="down" /></VArrow>
        </VScroll>
      </Workspace>
      <HScroll>
        <HArrow><Chevron d="left" /></HArrow>
        <HThumb />
        <HArrow $end><Chevron d="right" /></HArrow>
      </HScroll>
      <StatusBar>
        <StatusCell $w={178} $pl={4} $gap={7} $ls={0.12}><MoveIcon />861, 238px</StatusCell>
        <StatusCell $w={178} $pl={5}><QuadrantIcon dashed /></StatusCell>
        <StatusCell $w={178} $pl={5} $gap={5} $ls={0.32}><QuadrantIcon />2048 × 1080px</StatusCell>
        <StatusCell $w={178} $pl={5} />
        <Zoom>
          <Percent>100%</Percent>
          <ZoomButton />
          <Slider><Svg w={10} h={17}><path d="M0 0h10v12l-5 5-5-5z" fill="#0078d7" /></Svg></Slider>
          <ZoomButton plus />
        </Zoom>
      </StatusBar>
      <Taskbar>
        {tasks.map((t, i) => (
          <TaskItem key={i} $mr={t.mr} $active={t.active}>
            <TaskIcon>{t.icon}</TaskIcon>
            {t.open && <Underline $full={t.active} $split={t.split} />}
          </TaskItem>
        ))}
        <Tray>
          <Weather>
            <WeatherIcon />
            <Temp>19°C</Temp>
            <Sky>부분적으로 맑음</Sky>
          </Weather>
          <TrayIcon><Svg w={12} h={7}><path d="M.5 6.500L6 1l5.500 5.500" stroke="#111" strokeWidth="1.300" /></Svg></TrayIcon>
          <TrayIcon><TabletIcon /></TrayIcon>
          <TrayIcon><BatteryIcon /></TrayIcon>
          <TrayIcon><NetworkIcon /></TrayIcon>
          <TrayIcon><SpeakerIcon /></TrayIcon>
          <Ime>A</Ime>
          <Clock>
            <div>오후 5:04</div>
            <div>2022-10-16</div>
          </Clock>
          <Notice><NoticeIcon /></Notice>
          <Peek />
        </Tray>
      </Taskbar>
    </Window>
  );
}
